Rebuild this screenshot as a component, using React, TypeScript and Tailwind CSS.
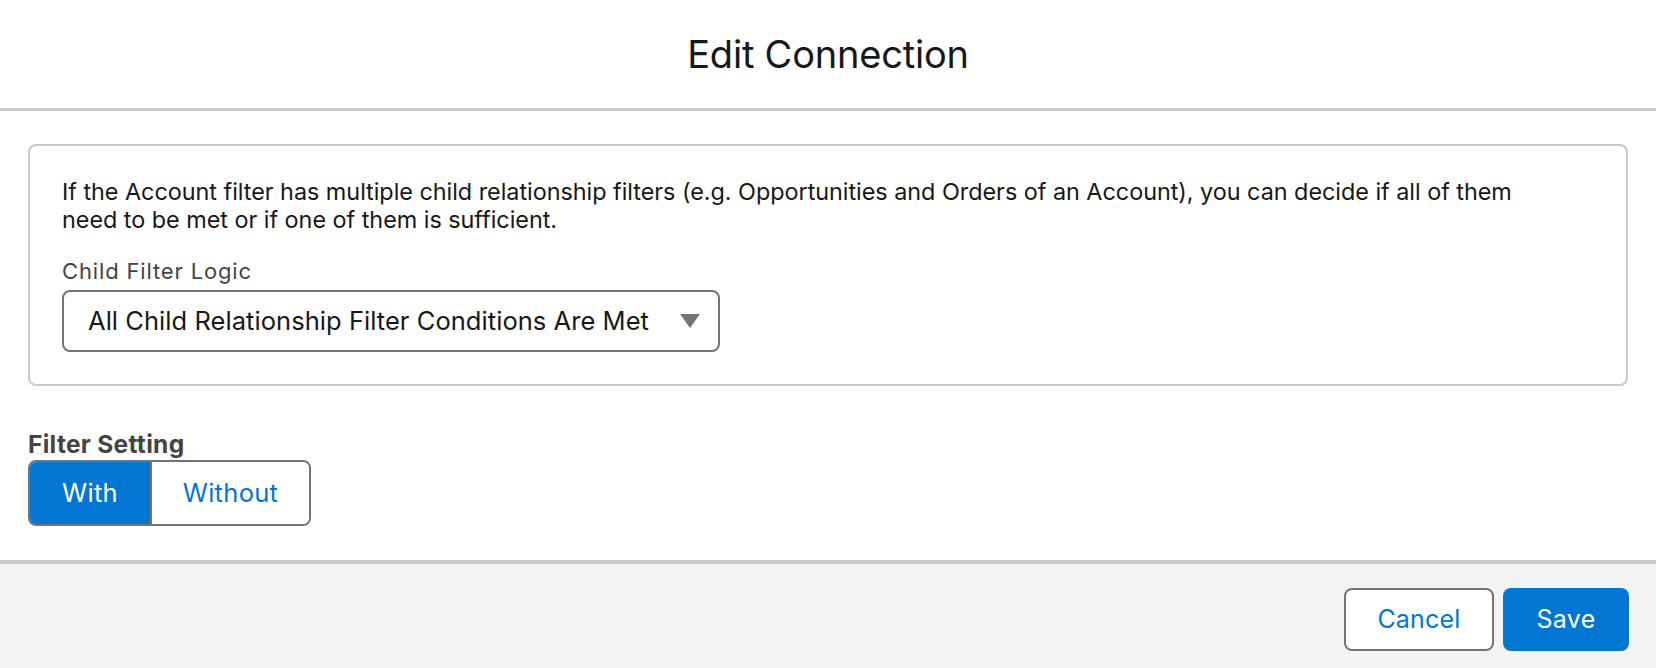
import React, { useState } from "react";

const font = { fontFamily: "Inter, 'Noto Sans', sans-serif" };

export default function App() {
  const [setting, setSetting] = useState<"with" | "without">("with");

  return (
    <div className="w-[1656px] h-[668px] flex flex-col bg-white text-[#181818]" style={font}>
      {/* Header */}
      <header className="h-[111px] shrink-0 flex items-center justify-center border-b-[3px] border-[#c9c9c9]">
        <h1 className="text-[38px] leading-none font-normal tracking-[-0.2px]">Edit Connection</h1>
      </header>

      {/* Body */}
      <main className="flex-1 px-[28px] pt-[33px]">
        <section className="border-2 border-[#c9c9c9] rounded-[8px] px-[32px] py-[32px]">
          <p className="max-w-[1505px] text-[23.4px] leading-[27.5px] tracking-[-0.03px]">
            If the Account filter has multiple child relationship filters (e.g. Opportunities and Orders of an Account), you can decide if all of them need to be met or if one of them is sufficient.
          </p>
          <label className="block mt-[24px] text-[22px] leading-[28px] tracking-[0.85px] text-[#444444]">Child Filter Logic</label>
          <button className="mt-[5px] w-[658px] h-[62px] border-2 border-[#747474] rounded-[8px] flex items-center justify-between pl-[24px] pr-[18px] text-[25.5px] tracking-[0.05px]">
            <span>All Child Relationship Filter Conditions Are Met</span>
            <svg width="20" height="14" viewBox="0 0 20 14">
              <path d="M0 0 H20 L10 14 Z" fill="#747474" />
            </svg>
          </button>
        </section>

        <div className="mt-[44px] text-[24.5px] leading-[28px] font-bold tracking-[0.3px] text-[#444444]">Filter Setting</div>
        <div className="mt-[2px] inline-flex h-[66px] border-2 border-[#747474] rounded-[8px] overflow-hidden">
          <button
            onClick={() => setSetting("with")}
            className={`w-[120px] text-[25.5px] tracking-[0.3px] ${setting === "with" ? "bg-[#0176d3] text-white" : "bg-white text-[#0176d3]"}`}
          >
            With
          </button>
          <button
            onClick={() => setSetting("without")}
            className={`w-[159px] border-l-2 border-[#747474] text-[25.5px] tracking-[0.3px] ${setting === "without" ? "bg-[#0176d3] text-white" : "bg-white text-[#0176d3]"}`}
          >
            Without
          </button>
        </div>
      </main>

      {/* Footer */}
      <footer className="h-[108px] shrink-0 bg-[#f3f3f3] border-t-4 border-[#c9c9c9] flex items-center justify-end gap-[9px] pr-[27px] pt-[7px]">
        <button className="w-[150px] h-[63px] bg-white border-2 border-[#747474] rounded-[8px] text-[25px] tracking-[0.2px] text-[#0176d3]">
          Cancel
        </button>
        <button className="w-[126px] h-[63px] bg-[#0176d3] rounded-[8px] text-[25px] tracking-[0.3px] text-white">
          Save
        </button>
      </footer>
    </div>
  );
}
